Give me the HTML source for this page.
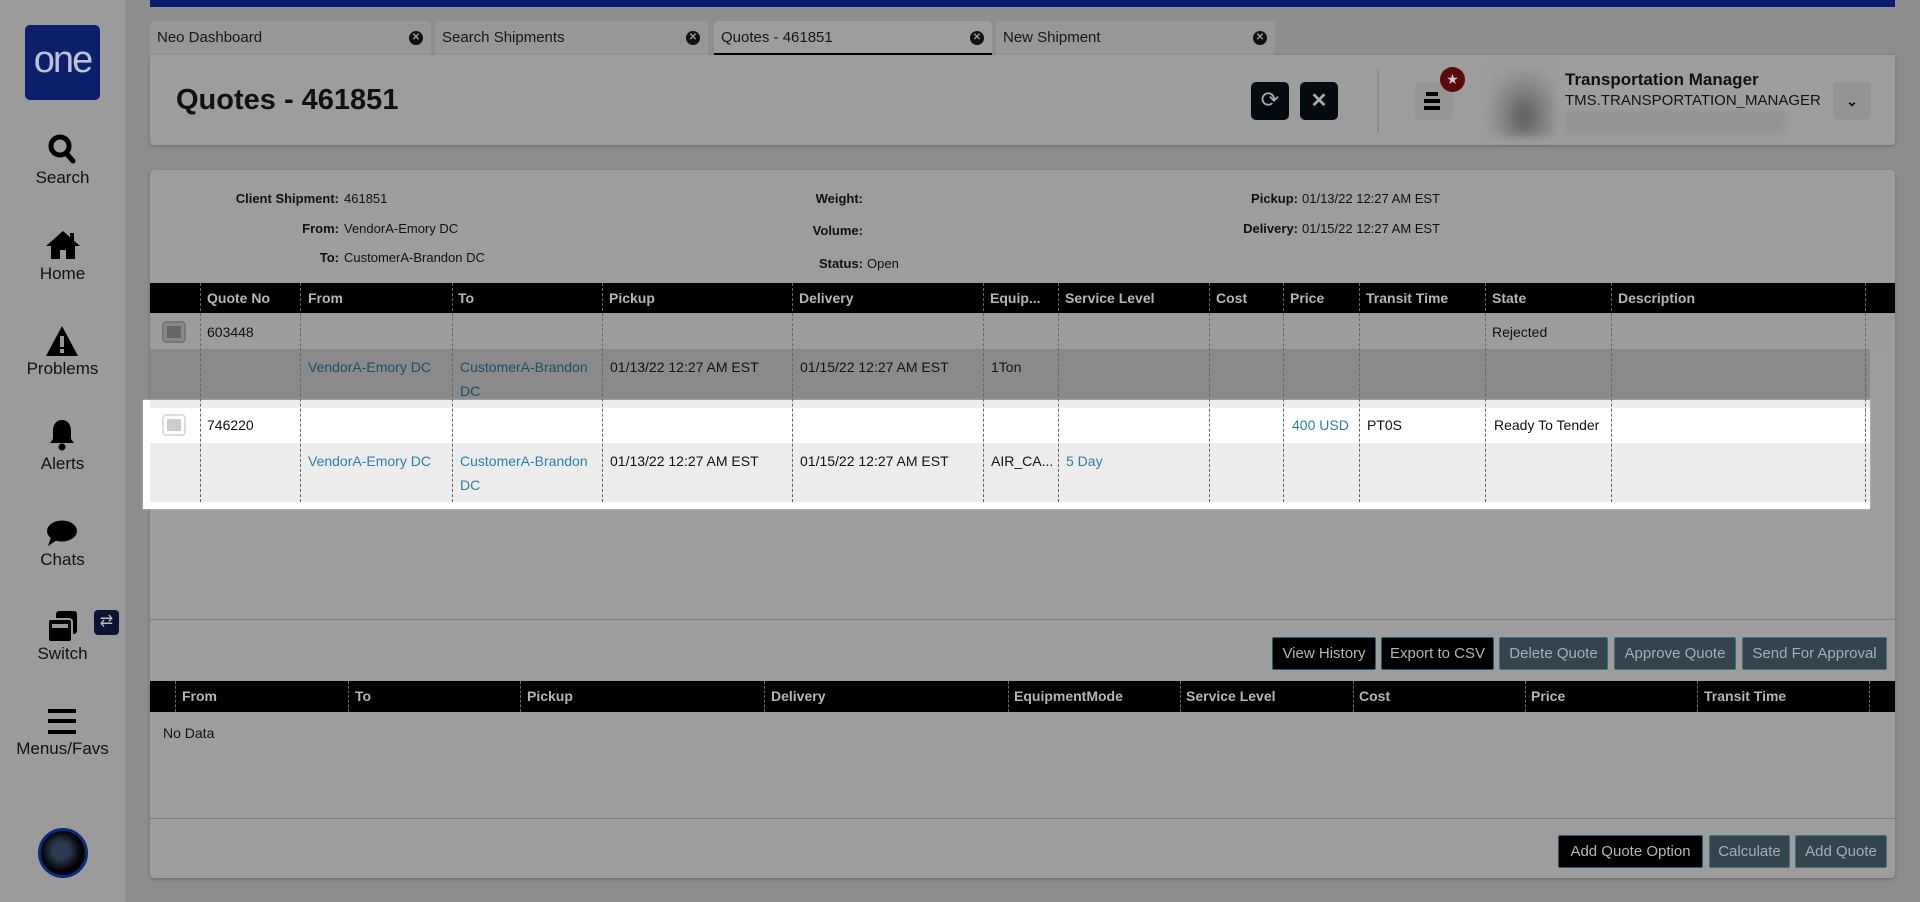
<!DOCTYPE html>
<html><head><meta charset="utf-8"><style>
*{box-sizing:border-box;margin:0;padding:0}
body{width:1920px;height:902px;overflow:hidden;background:#8d8d8d;font-family:"Liberation Sans",sans-serif;color:#111;position:relative}
.a{position:absolute}
.side{left:0;top:0;width:125px;height:902px;background:#9b9b9b}
.nav{position:absolute;left:0;width:125px;text-align:center;font-size:17px;color:#111}
.panel{background:#9d9d9d;border-radius:4px;box-shadow:0 1px 3px rgba(0,0,0,.25)}
.tab{top:21px;height:34px;background:#979797;border-radius:4px 4px 0 0;font-size:15px;padding:8px 7px;color:#161616}
.tab .x{position:absolute;right:8px;top:10px;width:14px;height:14px;border-radius:50%;background:#111;color:#999;font-size:10px;line-height:14px;text-align:center;font-weight:bold}
.lbl{font-size:13px;font-weight:bold;text-align:right;width:300px}
.val{font-size:13px}
.th{top:283px;height:30px;background:#000}
.hc{position:absolute;color:#b5b5b5;font-weight:bold;font-size:14px;top:7px}
.vl{position:absolute;width:0;border-left:1px dashed #666}
.c{position:absolute;font-size:14px}
.lk{color:#1d4e66}
.lk2{color:#2c7ea6}
.btn{position:absolute;height:33px;font-size:15px;color:#b5b5b5;text-align:center;line-height:31px;border:1px solid #2a5b70;border-radius:2px}
.bk{background:#000}
.sl{background:#33444f;border-color:#46707f;color:#9fb0b8}
</style></head><body>
<div class="a side"></div>
<div class="a" style="left:25px;top:25px;width:75px;height:75px;background:#0c1f6b;border-radius:5px;color:#bcc3d6;font-size:38px;text-align:center;line-height:70px;letter-spacing:-2px">one</div>

<svg class="a" style="left:47px;top:133px" width="30" height="32" viewBox="0 0 30 32"><circle cx="13" cy="13" r="9" fill="none" stroke="#000" stroke-width="5"/><path d="M19 20l7 8" stroke="#000" stroke-width="5" stroke-linecap="round"/></svg>
<div class="nav" style="top:168px">Search</div>
<svg class="a" style="left:45px;top:230px" width="36" height="30" viewBox="0 0 36 30"><path d="M18 1L1 16h5v13h9v-9h6v9h9V16h5L18 1z" fill="#000"/><rect x="25" y="3" width="4" height="8" fill="#000"/></svg>
<div class="nav" style="top:264px">Home</div>
<svg class="a" style="left:45px;top:325px" width="34" height="32" viewBox="0 0 34 32"><path d="M17 1L1 31h32z" fill="#000"/><rect x="15" y="11" width="4" height="11" fill="#999"/><rect x="15" y="24" width="4" height="4" fill="#999"/></svg>
<div class="nav" style="top:359px">Problems</div>
<svg class="a" style="left:48px;top:418px" width="28" height="34" viewBox="0 0 28 34"><path d="M14 2c-6 0-9 5-9 11v8l-3 4h24l-3-4v-8c0-6-3-11-9-11z" fill="#000"/><circle cx="14" cy="29" r="3.5" fill="#000"/></svg>
<div class="nav" style="top:454px">Alerts</div>
<svg class="a" style="left:46px;top:519px" width="32" height="28" viewBox="0 0 32 28"><ellipse cx="16" cy="12" rx="15" ry="10.5" fill="#000"/><path d="M5 18l-3 9 9-6z" fill="#000"/></svg>
<div class="nav" style="top:550px">Chats</div>
<svg class="a" style="left:46px;top:610px" width="34" height="33" viewBox="0 0 34 33"><rect x="10" y="1" width="21" height="23" rx="3" fill="#000"/><rect x="2" y="9" width="24" height="23" rx="3" fill="#000" stroke="#9b9b9b" stroke-width="2"/><rect x="6" y="14" width="16" height="4" fill="#9b9b9b"/></svg>
<div class="a" style="left:94px;top:610px;width:25px;height:25px;background:#0b1432;border-radius:4px;color:#bbb;font-size:16px;text-align:center;line-height:24px">⇄</div>
<div class="nav" style="top:644px">Switch</div>
<svg class="a" style="left:48px;top:709px" width="28" height="25" viewBox="0 0 28 25"><rect y="0" width="28" height="4" fill="#000"/><rect y="10" width="28" height="4" fill="#000"/><rect y="21" width="28" height="4" fill="#000"/></svg>
<div class="nav" style="top:739px">Menus/Favs</div>
<div class="a" style="left:38px;top:828px;width:50px;height:50px;border-radius:50%;background:radial-gradient(circle at 45% 45%,#2a3a50 25%,#000 60%);border:3px solid #0a2a7a"></div>

<div class="a" style="left:150px;top:0;width:1745px;height:7px;background:#0b1a6e"></div>

<div class="a tab" style="left:150px;width:281px">Neo Dashboard<span class="x">✕</span></div>
<div class="a tab" style="left:435px;width:273px">Search Shipments<span class="x">✕</span></div>
<div class="a tab" style="left:714px;width:278px;background:#9d9d9d;border-bottom:2px solid #000">Quotes - 461851<span class="x">✕</span></div>
<div class="a tab" style="left:996px;width:279px">New Shipment<span class="x">✕</span></div>

<div class="a panel" style="left:150px;top:55px;width:1745px;height:90px;border-radius:0 0 4px 4px"></div>
<div class="a" style="left:176px;top:84px;font-size:29px;font-weight:bold">Quotes - 461851</div>
<div class="a" style="left:1251px;top:82px;width:38px;height:38px;background:#050a10;border-radius:5px;color:#aaa;font-size:22px;text-align:center;line-height:36px">⟳</div>
<div class="a" style="left:1300px;top:82px;width:38px;height:38px;background:#050a10;border-radius:5px;color:#aaa;font-size:20px;text-align:center;line-height:38px;font-weight:bold">✕</div>
<div class="a" style="left:1377px;top:70px;width:2px;height:62px;background:#8a8a8a"></div>
<div class="a" style="left:1415px;top:82px;width:38px;height:38px;background:#959595;border-radius:5px"></div>
<svg class="a" style="left:1424px;top:92px" width="18" height="18" viewBox="0 0 18 18"><rect x="2" y="0" width="12" height="4" fill="#000"/><rect x="0" y="7" width="16" height="4" fill="#000"/><rect x="0" y="14" width="16" height="4" fill="#000"/></svg>
<div class="a" style="left:1440px;top:67px;width:25px;height:25px;border-radius:50%;background:#5a0a0a;color:#ccc;font-size:14px;text-align:center;line-height:25px">★</div>
<div class="a" style="left:1487px;top:67px;width:68px;height:70px;background:radial-gradient(ellipse at 55% 70%,#666 10%,#888 45%,#9b9b9b 75%);filter:blur(4px)"></div>
<div class="a" style="left:1565px;top:70px;font-size:17px;font-weight:bold">Transportation Manager</div>
<div class="a" style="left:1565px;top:92px;font-size:15px">TMS.TRANSPORTATION_MANAGER</div>
<div class="a" style="left:1565px;top:110px;width:220px;height:24px;background:#939393;filter:blur(3px)"></div>
<div class="a" style="left:1833px;top:82px;width:38px;height:38px;background:#949494;border-radius:5px;font-size:14px;text-align:center;line-height:38px;font-weight:bold">⌄</div>

<div class="a panel" style="left:150px;top:170px;width:1745px;height:708px"></div>
<div class="a lbl" style="left:39px;top:191px">Client Shipment:</div><div class="a val" style="left:344px;top:191px">461851</div>
<div class="a lbl" style="left:39px;top:221px">From:</div><div class="a val" style="left:344px;top:221px">VendorA-Emory DC</div>
<div class="a lbl" style="left:39px;top:250px">To:</div><div class="a val" style="left:344px;top:250px">CustomerA-Brandon DC</div>
<div class="a lbl" style="left:563px;top:191px">Weight:</div>
<div class="a lbl" style="left:563px;top:223px">Volume:</div>
<div class="a lbl" style="left:563px;top:256px">Status:</div><div class="a val" style="left:867px;top:256px">Open</div>
<div class="a lbl" style="left:998px;top:191px">Pickup:</div><div class="a val" style="left:1302px;top:191px">01/13/22 12:27 AM EST</div>
<div class="a lbl" style="left:998px;top:221px">Delivery:</div><div class="a val" style="left:1302px;top:221px">01/15/22 12:27 AM EST</div>

<div class="a th" style="left:150px;width:1745px">
<span class="hc" style="left:57px">Quote No</span><span class="hc" style="left:158px">From</span><span class="hc" style="left:308px">To</span><span class="hc" style="left:459px">Pickup</span><span class="hc" style="left:649px">Delivery</span><span class="hc" style="left:840px">Equip...</span><span class="hc" style="left:915px">Service Level</span><span class="hc" style="left:1066px">Cost</span><span class="hc" style="left:1140px">Price</span><span class="hc" style="left:1216px">Transit Time</span><span class="hc" style="left:1342px">State</span><span class="hc" style="left:1468px">Description</span>
</div>
<div class="a" style="left:150px;top:313px;width:1745px;height:36px;background:#9c9c9c"></div>
<div class="a" style="left:150px;top:349px;width:1720px;height:51px;background:#8a8a8a"></div>
<div class="a" style="left:143px;top:400px;width:1727px;height:109px;background:#fff;box-shadow:0 0 2px #ccc"></div>
<div class="a" style="left:150px;top:400px;width:1720px;height:8px;background:#ececec"></div>
<div class="a" style="left:150px;top:443px;width:1720px;height:59px;background:#ececec"></div>

<div class="vl" style="left:200px;top:283px;height:219px"></div>
<div class="vl" style="left:300px;top:283px;height:219px"></div>
<div class="vl" style="left:452px;top:283px;height:219px"></div>
<div class="vl" style="left:602px;top:283px;height:219px"></div>
<div class="vl" style="left:792px;top:283px;height:219px"></div>
<div class="vl" style="left:983px;top:283px;height:219px"></div>
<div class="vl" style="left:1058px;top:283px;height:219px"></div>
<div class="vl" style="left:1209px;top:283px;height:219px"></div>
<div class="vl" style="left:1283px;top:283px;height:219px"></div>
<div class="vl" style="left:1359px;top:283px;height:219px"></div>
<div class="vl" style="left:1485px;top:283px;height:219px"></div>
<div class="vl" style="left:1611px;top:283px;height:219px"></div>
<div class="vl" style="left:1865px;top:283px;height:219px"></div>

<div class="a" style="left:162px;top:321px;width:24px;height:22px;border:2px solid #777;border-radius:4px;background:#888"><div style="margin:3px;width:14px;height:12px;background:#666"></div></div>
<div class="c" style="left:207px;top:324px">603448</div>
<div class="c" style="left:1492px;top:324px">Rejected</div>
<div class="c lk" style="left:308px;top:359px">VendorA-Emory DC</div>
<div class="c lk" style="left:460px;top:355px;line-height:24px">CustomerA-Brandon<br>DC</div>
<div class="c" style="left:610px;top:359px">01/13/22 12:27 AM EST</div>
<div class="c" style="left:800px;top:359px">01/15/22 12:27 AM EST</div>
<div class="c" style="left:991px;top:359px">1Ton</div>

<div class="a" style="left:162px;top:414px;width:24px;height:22px;border:2px solid #ddd;border-radius:4px;background:#fff"><div style="margin:3px;width:14px;height:12px;background:#ccc"></div></div>
<div class="c" style="left:207px;top:417px">746220</div>
<div class="c lk2" style="left:1292px;top:417px">400 USD</div>
<div class="c" style="left:1367px;top:417px">PT0S</div>
<div class="c" style="left:1494px;top:417px">Ready To Tender</div>
<div class="c lk2" style="left:308px;top:453px">VendorA-Emory DC</div>
<div class="c lk2" style="left:460px;top:449px;line-height:24px">CustomerA-Brandon<br>DC</div>
<div class="c" style="left:610px;top:453px">01/13/22 12:27 AM EST</div>
<div class="c" style="left:800px;top:453px">01/15/22 12:27 AM EST</div>
<div class="c" style="left:991px;top:453px">AIR_CA...</div>
<div class="c lk2" style="left:1066px;top:453px">5 Day</div>

<div class="a" style="left:150px;top:619px;width:1745px;height:1px;background:#7e7e7e"></div>
<div class="btn bk" style="left:1272px;top:637px;width:104px">View History</div>
<div class="btn bk" style="left:1381px;top:637px;width:113px">Export to CSV</div>
<div class="btn sl" style="left:1499px;top:637px;width:109px">Delete Quote</div>
<div class="btn sl" style="left:1614px;top:637px;width:122px">Approve Quote</div>
<div class="btn sl" style="left:1742px;top:637px;width:145px">Send For Approval</div>

<div class="a" style="left:150px;top:681px;width:1745px;height:31px;background:#000"></div>
<div class="vl" style="left:175px;top:681px;height:31px"></div><span class="hc a" style="left:182px;top:688px">From</span>
<div class="vl" style="left:348px;top:681px;height:31px"></div><span class="hc a" style="left:355px;top:688px">To</span>
<div class="vl" style="left:520px;top:681px;height:31px"></div><span class="hc a" style="left:527px;top:688px">Pickup</span>
<div class="vl" style="left:764px;top:681px;height:31px"></div><span class="hc a" style="left:771px;top:688px">Delivery</span>
<div class="vl" style="left:1008px;top:681px;height:31px"></div><span class="hc a" style="left:1014px;top:688px">EquipmentMode</span>
<div class="vl" style="left:1180px;top:681px;height:31px"></div><span class="hc a" style="left:1186px;top:688px">Service Level</span>
<div class="vl" style="left:1353px;top:681px;height:31px"></div><span class="hc a" style="left:1359px;top:688px">Cost</span>
<div class="vl" style="left:1525px;top:681px;height:31px"></div><span class="hc a" style="left:1531px;top:688px">Price</span>
<div class="vl" style="left:1697px;top:681px;height:31px"></div><span class="hc a" style="left:1704px;top:688px">Transit Time</span>
<div class="vl" style="left:1869px;top:681px;height:31px"></div>
<div class="c" style="left:163px;top:725px">No Data</div>

<div class="a" style="left:150px;top:818px;width:1745px;height:1px;background:#7e7e7e"></div>
<div class="btn bk" style="left:1558px;top:835px;width:145px">Add Quote Option</div>
<div class="btn sl" style="left:1709px;top:835px;width:81px">Calculate</div>
<div class="btn sl" style="left:1795px;top:835px;width:92px">Add Quote</div>
</body></html>
